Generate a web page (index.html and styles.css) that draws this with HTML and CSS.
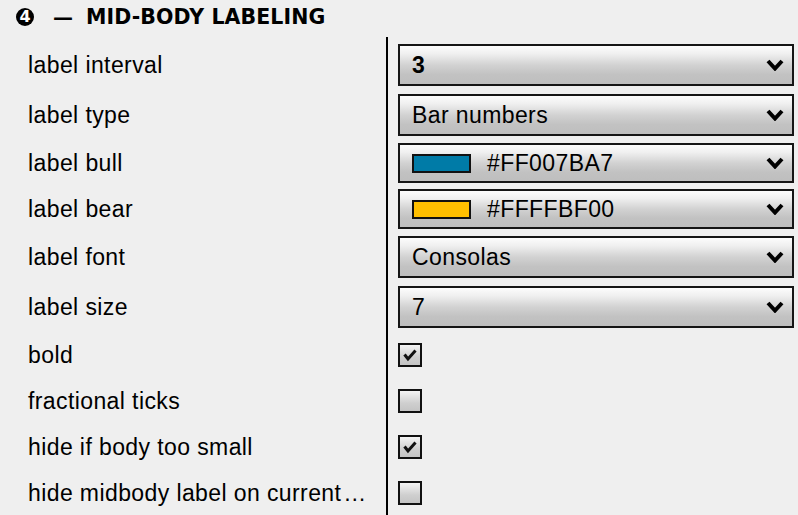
FILE: index.html
```html
<!DOCTYPE html>
<html>
<head>
<meta charset="utf-8">
<link rel="stylesheet" href="styles.css">
</head>
<body>
<div class="header"><span class="num">4</span><span class="dash">—</span><span class="title">MID-BODY LABELING</span></div>
<div class="panel">
  <div class="labels">
    <div class="row r50">label interval</div>
    <div class="row r50">label type</div>
    <div class="row r46">label bull</div>
    <div class="row r46">label bear</div>
    <div class="row r50">label font</div>
    <div class="row r50">label size</div>
    <div class="row r46">bold</div>
    <div class="row r46">fractional ticks</div>
    <div class="row r46">hide if body too small</div>
    <div class="row r46">hide midbody label on current<span class="ell">…</span></div>
  </div>
  <div class="controls">
    <div class="row r50"><div class="select h42"><span class="val bold">3</span><svg class="chev" width="18" height="12" viewBox="0 0 18 12"><polyline points="2,2 9,9.5 16,2" fill="none" stroke="#000" stroke-width="4"/></svg></div></div>
    <div class="row r50"><div class="select h42"><span class="val">Bar numbers</span><svg class="chev" width="18" height="12" viewBox="0 0 18 12"><polyline points="2,2 9,9.5 16,2" fill="none" stroke="#000" stroke-width="4"/></svg></div></div>
    <div class="row r46"><div class="select h40"><span class="swatch bull"></span><span class="val">#FF007BA7</span><svg class="chev" width="18" height="12" viewBox="0 0 18 12"><polyline points="2,2 9,9.5 16,2" fill="none" stroke="#000" stroke-width="4"/></svg></div></div>
    <div class="row r46"><div class="select h40"><span class="swatch bear"></span><span class="val">#FFFFBF00</span><svg class="chev" width="18" height="12" viewBox="0 0 18 12"><polyline points="2,2 9,9.5 16,2" fill="none" stroke="#000" stroke-width="4"/></svg></div></div>
    <div class="row r50"><div class="select h42"><span class="val">Consolas</span><svg class="chev" width="18" height="12" viewBox="0 0 18 12"><polyline points="2,2 9,9.5 16,2" fill="none" stroke="#000" stroke-width="4"/></svg></div></div>
    <div class="row r50"><div class="select h42"><span class="val">7</span><svg class="chev" width="18" height="12" viewBox="0 0 18 12"><polyline points="2,2 9,9.5 16,2" fill="none" stroke="#000" stroke-width="4"/></svg></div></div>
    <div class="row r46"><span class="check"><svg width="16" height="14" viewBox="0 0 16 14"><polyline points="2.5,6.5 6,11 13.5,2.5" fill="none" stroke="#111" stroke-width="3"/></svg></span></div>
    <div class="row r46"><span class="check"></span></div>
    <div class="row r46"><span class="check"><svg width="16" height="14" viewBox="0 0 16 14"><polyline points="2.5,6.5 6,11 13.5,2.5" fill="none" stroke="#111" stroke-width="3"/></svg></span></div>
    <div class="row r46"><span class="check"></span></div>
  </div>
</div>
</body>
</html>
```
FILE: styles.css
```css
html, body {
  margin: 0;
  padding: 0;
  background: #efefef;
  width: 798px;
  height: 515px;
  overflow: hidden;
}
body {
  font-family: "Liberation Sans", Arial, sans-serif;
  color: #000;
}
.header {
  height: 37px;
  display: flex;
  align-items: center;
  padding-left: 16px;
  box-sizing: border-box;
  padding-bottom: 4px;
  font-family: "DejaVu Sans", Verdana, sans-serif;
  font-weight: bold;
  color: #000;
}
.num {
  flex: none;
  width: 18px;
  height: 18px;
  border-radius: 50%;
  background: #000;
  color: #fff;
  font-size: 16px;
  line-height: 18px;
  text-align: center;
}
.dash {
  font-size: 20px;
  margin-left: 19px;
  margin-right: 13px;
}
.title {
  font-size: 20.5px;
  letter-spacing: 0.1px;
}
.panel {
  display: flex;
}
.labels {
  width: 386px;
  padding-top: 3px;
}
.labels .row {
  padding-left: 28px;
  font-size: 23px;
  letter-spacing: 0.4px;
  white-space: nowrap;
}
.ell {
  margin-left: 2px;
  letter-spacing: 2px;
}
.controls {
  flex: 1;
  border-left: 2px solid #000;
  padding-top: 3px;
  padding-left: 10px;
  padding-right: 4px;
  height: 480px;
}
.row {
  display: flex;
  align-items: center;
  box-sizing: border-box;
}
.r50 { height: 50px; }
.r46 { height: 46px; }
.select {
  flex: 1;
  display: flex;
  align-items: center;
  box-sizing: border-box;
  border: 2px solid #151515;
  background: linear-gradient(#fcfcfc 0%, #f0f0f0 20%, #d2d2d2 50%, #c2c2c2 75%, #bebebe 100%);
  padding-left: 12px;
  padding-right: 8px;
}
.h42 { height: 42px; }
.h40 { height: 40px; }
.val {
  flex: 1;
  font-size: 23px;
  letter-spacing: 0.4px;
  color: #000;
}
.val.bold { font-weight: bold; }
.chev { flex: none; }
.swatch {
  width: 59px;
  height: 19px;
  box-sizing: border-box;
  border: 2px solid #111;
  margin-right: 16px;
  flex: none;
}
.bull { background: #007ba7; }
.bear { background: #ffbf00; }
.check {
  width: 24px;
  height: 24px;
  box-sizing: border-box;
  border: 2px solid #111;
  background: linear-gradient(#f4f4f4, #cfcfcf 60%, #c4c4c4);
  display: flex;
  align-items: center;
  justify-content: center;
}
```
